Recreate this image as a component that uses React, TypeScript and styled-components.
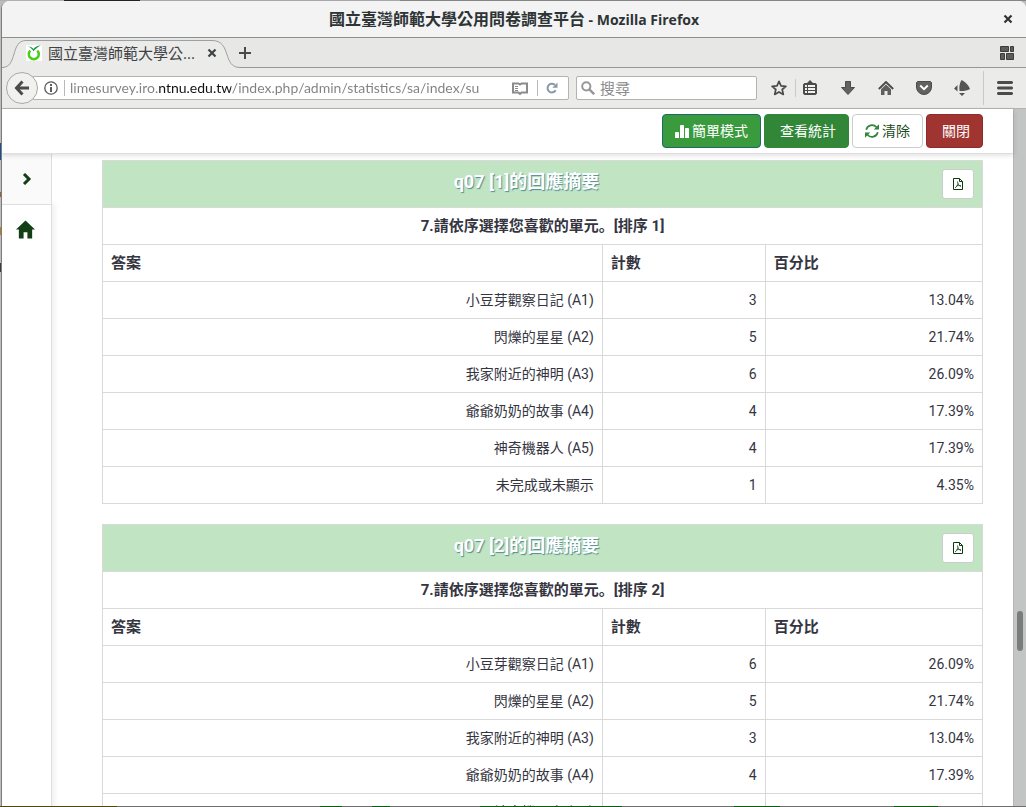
import React from "react";
import styled, { createGlobalStyle, css } from "styled-components";

const uiFont = '"Open Sans", "Noto Sans CJK TC", sans-serif';
const pageFont = 'Roboto, "Noto Sans CJK SC", sans-serif';
const line = "#d9d9d9";

const GlobalStyle = createGlobalStyle`
  *, *::before, *::after { box-sizing: border-box; }
  html, body, #root { height: 100%; }
  body { margin: 0; overflow: hidden; font-family: ${pageFont}; font-size: 14px; color: #35353f; }
  button, input { font: inherit; color: inherit; }
  svg { display: block; flex: none; }
`;

const Desktop = styled.div`
  height: 100vh;
  padding: 1px 0 1px 1px;
  background:
    linear-gradient(#1c4f92, #1c4f92) 0 143px / 2px 17px no-repeat,
    linear-gradient(#8a6a2c, #8a6a2c) 0 192px / 2px 5px no-repeat,
    linear-gradient(#b3801f, #b3801f) 0 227px / 2px 8px no-repeat,
    linear-gradient(#3c3c3c, #3c3c3c) 0 263px / 2px 9px no-repeat,
    linear-gradient(90deg, #4c4a08 0 117px, #6e6e6e 117px 320px, #0c5a10 320px 342px, #6e6e6e 342px 372px, #0c5a10 372px 390px, #6e6e6e 390px 480px, #0c5a10 480px 622px, #6e6e6e 622px 734px, #0c5a10 734px 780px, #6e6e6e 780px 894px, #0c5a10 894px 938px, #6e6e6e 938px) 0 100% / 100% 1px no-repeat,
    linear-gradient(90deg, #b0b0b0 0 64px, #222222 64px 140px, #a8a8a8 140px 400px, #858585 400px) 0 0 / 100% 1px no-repeat,
    #bdbdbd;
`;

const Window = styled.div`
  height: 100%;
  display: flex;
  flex-direction: column;
  overflow: hidden;
  border-left: 1px solid #7d7d7d;
  border-radius: 8px 8px 0 0;
  background: #ffffff;
`;

const TitleBar = styled.header`
  display: grid;
  grid-template-columns: 36px 1fr 36px;
  align-items: center;
  height: 37px;
  flex: none;
  background: #f3f3f3;
  border-bottom: 1px solid #8e8e8b;
  font-family: ${uiFont};
  color: #2e3436;
`;

const WindowTitle = styled.h1`
  grid-column: 2;
  margin: 0;
  font-size: 16px;
  line-height: 20px;
  font-weight: 700;
  text-align: center;
  white-space: nowrap;
`;

const AppName = styled.span`
  font-size: 14px;
`;

const PlainButton = styled.button`
  display: flex;
  align-items: center;
  justify-content: center;
  padding: 0;
  border: 0;
  background: none;
  cursor: pointer;
`;

const TabBar = styled.div`
  display: flex;
  align-items: stretch;
  height: 30px;
  flex: none;
  background: #e7e7e5;
  border-bottom: 1px solid #979795;
  font-family: ${uiFont};
`;

const Tab = styled.div`
  position: relative;
  display: flex;
  align-items: center;
  width: 236px;
  height: 30px;
  padding: 0 17px 0 24px;
  color: #3f4345;
`;

const TabShape = styled.svg`
  position: absolute;
  inset: 0;
`;

const TabLabel = styled.span`
  position: relative;
  flex: 1;
  margin-left: 6px;
  font-size: 15px;
  line-height: 20px;
  white-space: nowrap;
`;

const TabIcon = styled.span`
  position: relative;
`;

const TabAction = styled(PlainButton)`
  position: relative;
  width: 18px;
`;

const NewTab = styled(PlainButton)`
  width: 14px;
`;

const TabSpacer = styled.div`
  flex: 1;
`;

const TabGroups = styled(PlainButton)`
  width: 38px;
`;

const NavBar = styled.nav`
  display: flex;
  align-items: center;
  height: 41px;
  flex: none;
  padding-left: 4px;
  background: #ebebe9;
  border-bottom: 1px solid #b4b4b0;
  color: #4b4b4b;
  font-family: ${uiFont};
`;

const BackButton = styled(PlainButton)`
  position: relative;
  z-index: 1;
  width: 32px;
  height: 32px;
  margin-right: -6px;
  flex: none;
  border: 1px solid #a9a9a5;
  border-radius: 50%;
  background: #f1f1ef;
`;

const field = css`
  display: flex;
  align-items: center;
  height: 24px;
  background: #ffffff;
  border: 1px solid #b3b3af;
  border-radius: 2px;
`;

const UrlBox = styled.div`
  ${field}
  flex: 1;
  min-width: 0;
  padding: 0 10px 0 11px;
`;

const SearchBox = styled.label`
  ${field}
  flex: none;
  width: 181px;
  margin-left: 7px;
  padding: 0 4px;
  gap: 5px;
`;

const TextInput = styled.input`
  flex: 1;
  min-width: 0;
  height: 20px;
  padding: 0;
  border: 0;
  outline: 0;
  background: none;
  font-size: 15px;
  line-height: 20px;
  &::placeholder { color: #8a8a8a; opacity: 1; }
`;

const UrlInput = styled(TextInput)`
  font-family: Lato, "Noto Sans CJK TC", sans-serif;
  font-size: 14px;
  color: transparent;
  background: linear-gradient(90deg, #808080 0 88px, #111111 88px 161px, #808080 161px);
  -webkit-background-clip: text;
  background-clip: text;
`;

const FieldRule = styled.span`
  width: 1px;
  height: 16px;
  flex: none;
  margin: 0 5px 0 6px;
  background: #b9b9b7;
`;

const ReloadRule = styled(FieldRule)`
  margin: 0 8px 0 9px;
`;

const Tool = styled(PlainButton)`
  width: 24px;
  height: 32px;
  flex: none;
`;

const ToolRule = styled.span<{ $tall?: boolean }>`
  width: 1px;
  height: ${(p) => (p.$tall ? "34px" : "18px")};
  flex: none;
  background: #c9c9c6;
`;

const StarTool = styled(Tool)`
  margin: 0 4px 0 10px;
`;

const ToolGroup = styled.div`
  display: flex;
  gap: 14px;
  padding: 0 9px 0 2px;
`;

const MenuTool = styled(Tool)`
  margin: 0 9px;
`;

const Viewport = styled.div`
  display: flex;
  flex: 1;
  min-height: 0;
`;

const Page = styled.div`
  display: flex;
  flex-direction: column;
  flex: 1;
  min-width: 0;
`;

const Toolbar = styled.div`
  position: relative;
  z-index: 1;
  display: flex;
  justify-content: flex-end;
  gap: 3px;
  flex: none;
  padding: 5px 30px 5px 0;
  background: #ffffff;
  box-shadow: 0 1px 0 #e0dede, 0 2px 5px rgba(60, 40, 40, 0.18);
`;

const tones = {
  active: css`background: #3a9a3e; border-color: #1d6a66; color: #ffffff;`,
  solid: css`background: #328637; border-color: #328637; color: #ffffff;`,
  plain: css`background: #ffffff; border-color: #cccccc; color: #1c4a20;`,
  danger: css`background: #9f3430; border-color: #8f2b2b; color: #ffffff;`,
};

const ActionButton = styled.button<{ $tone: keyof typeof tones }>`
  display: flex;
  align-items: center;
  gap: 3px;
  height: 34px;
  padding: 0 12px;
  border: 1px solid;
  border-radius: 4px;
  font-size: 14px;
  line-height: 20px;
  white-space: nowrap;
  cursor: pointer;
  ${(p) => tones[p.$tone]}
  ${(p) => (p.$tone === "solid" || p.$tone === "danger") && "padding-left: 15px;"}
`;

const Body = styled.div`
  display: flex;
  flex: 1;
  min-height: 0;
`;

const Sidebar = styled.aside`
  width: 50px;
  flex: none;
  border-right: 1px solid #dedede;
  background: #ffffff;
  box-shadow: 3px 50px 5px rgba(0, 0, 0, 0.06);
  color: #123f16;
`;

const SideToggle = styled(PlainButton)`
  width: 100%;
  height: 52px;
  border-bottom: 1px solid #dedede;
  background: #fafafa;
`;

const SideLink = styled.a`
  display: flex;
  align-items: center;
  justify-content: center;
  height: 48px;
  padding-right: 2px;
  color: inherit;
`;

const Content = styled.main`
  flex: 1;
  min-width: 0;
  overflow: hidden;
  padding: 7px 30px 0 50px;
`;

const SummaryTable = styled.table`
  width: 100%;
  margin-bottom: 20px;
  table-layout: fixed;
  border-collapse: collapse;
  font-size: 14px;
  line-height: 20px;
`;

const Col = styled.col<{ $share: string }>`
  width: ${(p) => p.$share};
`;

const BannerCell = styled.th`
  height: 47px;
  padding: 0 8px;
  border: 1px solid ${line};
  background: #c1e4c2;
  font-weight: 400;
`;

const Banner = styled.div`
  display: flex;
  align-items: flex-start;
  height: 30px;
`;

const BannerTitle = styled.h2`
  flex: 1;
  margin: 0;
  color: #ffffff;
  font-size: 18px;
  line-height: 26px;
  font-weight: 700;
  text-align: center;
  text-shadow: 1px 1px 1px #4e8f96;
`;

const PdfButton = styled(PlainButton)`
  width: 32px;
  height: 30px;
  border: 1px solid #cccccc;
  border-radius: 3px;
  background: #ffffff;
  color: #0c3a10;
`;

const HeadCell = styled.th<{ $center?: boolean }>`
  height: 37px;
  padding: 8px;
  border: 1px solid ${line};
  font-size: 15px;
  font-weight: 700;
  text-align: ${(p) => (p.$center ? "center" : "left")};
`;

const Cell = styled.td`
  height: 37px;
  padding: 8px;
  border: 1px solid ${line};
  text-align: right;
`;

const Scrollbar = styled.div`
  position: relative;
  width: 13px;
  flex: none;
  background: #c3c5c4;
  border-left: 1px solid #b5b5b3;
`;

const Thumb = styled.div`
  position: absolute;
  top: 72%;
  left: 3px;
  width: 6px;
  height: 40px;
  border-radius: 3px;
  background: #7b7d7d;
`;

const CrossIcon = () => (
  <svg width="10" height="10" viewBox="0 0 10 10" stroke="currentColor" strokeWidth="2.2" fill="none">
    <path d="M1.5 1.5l7 7M8.5 1.5l-7 7" />
  </svg>
);

const LimeIcon = () => (
  <svg width="16" height="16" viewBox="0 0 16 16">
    <rect width="16" height="16" fill="#fff" />
    <path d="M4.300 5.600A5 5 0 1 0 11.300 5.600" fill="none" stroke="#45cf17" strokeWidth="2.500" />
    <path d="M2 1.500C4.500 1.500 6.500 2.500 7.500 4 9 2 11.500.500 15 .300 12 1.800 9.500 3.800 7.600 6.300 6.200 4 4.500 2.500 2 1.500z" fill="#189a4a" />
  </svg>
);

const PlusIcon = () => (
  <svg width="12" height="12" viewBox="0 0 12 12" stroke="#4a4a4a" strokeWidth="2">
    <path d="M6 0v12M0 6h12" />
  </svg>
);

const GroupsIcon = () => (
  <svg width="14" height="14" viewBox="0 0 14 14" fill="#5c5c5c" stroke="#3c3c3c">
    <path d="M.5.5h8v5h-8zM10.500.5h3v5h-3zM.5 7.500h4v6h-4zM6.500 7.500h7v6h-7z" />
  </svg>
);

const BackIcon = () => (
  <svg width="16" height="16" viewBox="0 0 16 16" fill="none" stroke="#4b4b4b" strokeWidth="3">
    <path d="M8.500 1.500L2.500 8l6 6.500M3 8h12" />
  </svg>
);

const InfoIcon = () => (
  <svg width="14" height="14" viewBox="0 0 14 14">
    <circle cx="7" cy="7" r="6.200" fill="none" stroke="#5a5a5a" strokeWidth="1.300" />
    <path d="M6 3h2v2H6zM6 6h2v5H6z" fill="#5a5a5a" />
  </svg>
);

const ReaderIcon = () => (
  <svg width="16" height="13" viewBox="0 0 16 13" fill="none" stroke="#8b8b8b" strokeWidth="2">
    <path d="M1 1.500h5.500L8 2.500l1.500-1H15v9H9.500L8 12l-1.500-1.500H1z" />
    <path d="M3 4.500h3M3 6.500h3M3 8.500h3" strokeWidth="1" />
  </svg>
);

const ReloadIcon = () => (
  <svg width="12" height="12" viewBox="0 0 12 12">
    <path d="M9.600 8.300A4.300 4.300 0 1 1 8.800 3" fill="none" stroke="#8a97a8" strokeWidth="2" />
    <path d="M11.500.5v5.200H6.300z" fill="#8a97a8" />
  </svg>
);

const SearchIcon = () => (
  <svg width="14" height="14" viewBox="0 0 14 14" fill="none" stroke="#979797" strokeWidth="2">
    <circle cx="5.300" cy="5.300" r="4.100" />
    <path d="M8.300 8.300l4.900 4.900" strokeWidth="2.400" />
  </svg>
);

const StarIcon = () => (
  <svg width="16" height="16" viewBox="0 0 16 16" fill="none" stroke="#4b4b4b" strokeWidth="1.700" strokeLinejoin="round">
    <path d="M8 1.300l2 4.500 4.900.5-3.700 3.200 1.100 4.900L8 11.900l-4.300 2.500 1.100-4.900L1.100 6.300 6 5.800z" />
  </svg>
);

const ClipboardIcon = () => (
  <svg width="14" height="16" viewBox="0 0 14 16">
    <path d="M1.500 3H4l3-3 3 3h2.500L14 4.500v9L12.500 15h-11L0 13.500v-9z" fill="#4b4b4b" />
    <path d="M2 5h2v2H2zM5 5h7v2H5zM2 8h2v2H2zM5 8h7v2H5zM2 11h2v2H2zM5 11h7v2H5z" fill="#f2f2f0" />
  </svg>
);

const DownIcon = () => (
  <svg width="14" height="14" viewBox="0 0 14 14">
    <path d="M4.500.5h5v6h4L7 13.500.5 6.500h4z" fill="#626262" stroke="#4b4b4b" />
  </svg>
);

const NavHomeIcon = () => (
  <svg width="16" height="14" viewBox="0 0 16 14">
    <path d="M.8 8L8 1l7.200 7" fill="none" stroke="#4b4b4b" strokeWidth="1.900" />
    <path d="M3 8.200L8 3.500l5 4.700V14H9.500v-4h-3v4H3z" fill="#606060" />
  </svg>
);

const PocketIcon = () => (
  <svg width="16" height="14" viewBox="0 0 16 14">
    <path d="M1.500.5h13l1 1V6a7.500 7.500 0 0 1-15 0V1.500z" fill="#626262" stroke="#4b4b4b" />
    <path d="M4.200 4.500L8 8.200l3.800-3.700" fill="none" stroke="#fff" strokeWidth="2" />
  </svg>
);

const AddonIcon = () => (
  <svg width="16" height="16" viewBox="0 0 16 16" fill="#555">
    <path d="M7.500 0c4 2 7.500 5.500 8.500 9-3 1.800-7 2.300-10.500 2C5 7 5.500 3 7.500 0zM0 8.500L3.500 5v6.500zM5 13h6l-3 3z" />
  </svg>
);

const MenuIcon = () => (
  <svg width="16" height="14" viewBox="0 0 16 14" fill="#4b4b4b">
    <path d="M1 0h14l1 1v1l-1 1H1L0 2V1zM1 5.500h14l1 1v1l-1 1H1l-1-1v-1zM1 11h14l1 1v1l-1 1H1l-1-1v-1z" />
  </svg>
);

const ChartIcon = () => (
  <svg width="14" height="14" viewBox="0 0 14 14" fill="currentColor">
    <path d="M1 8h2q1 0 1 1v5H0V9q0-1 1-1zM6 1h2q1 0 1 1v12H5V2q0-1 1-1zM11 4h2q1 0 1 1v9h-4V5q0-1 1-1z" />
  </svg>
);

const RefreshIcon = () => (
  <svg width="14" height="14" viewBox="0 0 14 14" fill="none" stroke="#328637" strokeWidth="1.700">
    <path d="M1.200 5.800A5.900 5.900 0 0 1 11.500 3.300M12.800 8.200A5.900 5.900 0 0 1 2.500 10.700" />
    <path d="M14 .3v5.200H8.800zM0 13.700V8.500h5.200z" fill="#328637" stroke="none" />
  </svg>
);

const PdfIcon = () => (
  <svg width="12" height="12" viewBox="0 0 12 12" fill="none" stroke="currentColor">
    <path d="M1.500.500h6l3 3v8h-9z" />
    <path d="M7.500.500v3h3" />
    <path d="M5.500 3.500c.2 2.500 1.200 4 3.500 5M6 5.500c-.5 2-1.500 3.500-3 4.500M4.500 8C5.500 7.500 7 7.300 9 7.800" strokeWidth=".8" />
  </svg>
);

const ChevronIcon = () => (
  <svg width="10" height="12" viewBox="0 0 10 12" fill="none" stroke="currentColor" strokeWidth="3">
    <path d="M2 1l5 5-5 5" />
  </svg>
);

const HomeIcon = () => (
  <svg width="19" height="19" viewBox="0 0 20 19" fill="currentColor">
    <path d="M10 0l10 9.500h-3V19h-5v-6.500H8V19H3V9.500H0z" />
  </svg>
);

type Row = [string, string, string];

const summaries: { code: string; rank: number; rows: Row[] }[] = [
  {
    code: "q07 [1]",
    rank: 1,
    rows: [
      ["小豆芽觀察日記 (A1)", "3", "13.04%"],
      ["閃爍的星星 (A2)", "5", "21.74%"],
      ["我家附近的神明 (A3)", "6", "26.09%"],
      ["爺爺奶奶的故事 (A4)", "4", "17.39%"],
      ["神奇機器人 (A5)", "4", "17.39%"],
      ["未完成或未顯示", "1", "4.35%"],
    ],
  },
  {
    code: "q07 [2]",
    rank: 2,
    rows: [
      ["小豆芽觀察日記 (A1)", "6", "26.09%"],
      ["閃爍的星星 (A2)", "5", "21.74%"],
      ["我家附近的神明 (A3)", "3", "13.04%"],
      ["爺爺奶奶的故事 (A4)", "4", "17.39%"],
      ["神奇機器人 (A5)", "", ""],
    ],
  },
];

const Summary = ({ code, rank, rows }: (typeof summaries)[number]) => (
  <SummaryTable>
    <colgroup>
      <Col $share="56.8%" />
      <Col $share="18.5%" />
      <Col $share="24.7%" />
    </colgroup>
    <thead>
      <tr>
        <BannerCell colSpan={3}>
          <Banner>
            <BannerTitle>{code}的回應摘要</BannerTitle>
            <PdfButton aria-label="PDF"><PdfIcon /></PdfButton>
          </Banner>
        </BannerCell>
      </tr>
      <tr>
        <HeadCell colSpan={3} $center>7.請依序選擇您喜歡的單元。[排序 {rank}]</HeadCell>
      </tr>
      <tr>
        <HeadCell>答案</HeadCell>
        <HeadCell>計數</HeadCell>
        <HeadCell>百分比</HeadCell>
      </tr>
    </thead>
    <tbody>
      {rows.map(([answer, count, percent]) => (
        <tr key={answer}>
          <Cell>{answer}</Cell>
          <Cell>{count}</Cell>
          <Cell>{percent}</Cell>
        </tr>
      ))}
    </tbody>
  </SummaryTable>
);

export default function App() {
  return (
    <Desktop>
      <GlobalStyle />
      <Window>
        <TitleBar>
          <WindowTitle>國立臺灣師範大學公用問卷調查平台<AppName> - Mozilla Firefox</AppName></WindowTitle>
          <PlainButton aria-label="Close window"><CrossIcon /></PlainButton>
        </TitleBar>
        <TabBar>
          <Tab>
            <TabShape width="238" height="30" viewBox="0 0 238 30" fill="#ebebe9">
              <path d="M0 29.500C16 29.500 8 2.500 24 2.500H210C230 2.500 220 29.500 238 29.500V30H0z" />
              <path d="M0 29.500C16 29.500 8 2.500 24 2.500H210C230 2.500 220 29.500 238 29.500" fill="none" stroke="#9a9fa8" />
            </TabShape>
            <TabIcon><LimeIcon /></TabIcon>
            <TabLabel>國立臺灣師範大學公...</TabLabel>
            <TabAction aria-label="Close tab"><CrossIcon /></TabAction>
          </Tab>
          <NewTab aria-label="New tab"><PlusIcon /></NewTab>
          <TabSpacer />
          <TabGroups aria-label="Tab groups"><GroupsIcon /></TabGroups>
        </TabBar>
        <NavBar>
          <BackButton aria-label="Back"><BackIcon /></BackButton>
          <UrlBox>
            <InfoIcon />
            <FieldRule />
            <UrlInput aria-label="Address" defaultValue="limesurvey.iro.ntnu.edu.tw/index.php/admin/statistics/sa/index/su" />
            <PlainButton aria-label="Reader view"><ReaderIcon /></PlainButton>
            <ReloadRule />
            <PlainButton aria-label="Reload"><ReloadIcon /></PlainButton>
          </UrlBox>
          <SearchBox>
            <SearchIcon />
            <TextInput aria-label="搜尋" placeholder="搜尋" />
          </SearchBox>
          <StarTool aria-label="Bookmark"><StarIcon /></StarTool>
          <ToolRule />
          <ToolGroup>
            <Tool aria-label="Bookmarks list"><ClipboardIcon /></Tool>
            <Tool aria-label="Downloads"><DownIcon /></Tool>
            <Tool aria-label="Home"><NavHomeIcon /></Tool>
            <Tool aria-label="Pocket"><PocketIcon /></Tool>
            <Tool aria-label="Add-on"><AddonIcon /></Tool>
          </ToolGroup>
          <ToolRule $tall />
          <MenuTool aria-label="Menu"><MenuIcon /></MenuTool>
        </NavBar>
        <Viewport>
          <Page>
            <Toolbar>
              <ActionButton $tone="active"><ChartIcon />簡單模式</ActionButton>
              <ActionButton $tone="solid">查看統計</ActionButton>
              <ActionButton $tone="plain"><RefreshIcon />清除</ActionButton>
              <ActionButton $tone="danger">關閉</ActionButton>
            </Toolbar>
            <Body>
              <Sidebar>
                <SideToggle aria-label="Expand sidebar"><ChevronIcon /></SideToggle>
                <SideLink href="#" aria-label="Home"><HomeIcon /></SideLink>
              </Sidebar>
              <Content>
                {summaries.map((s) => (
                  <Summary key={s.code} {...s} />
                ))}
              </Content>
            </Body>
          </Page>
          <Scrollbar><Thumb /></Scrollbar>
        </Viewport>
      </Window>
    </Desktop>
  );
}
